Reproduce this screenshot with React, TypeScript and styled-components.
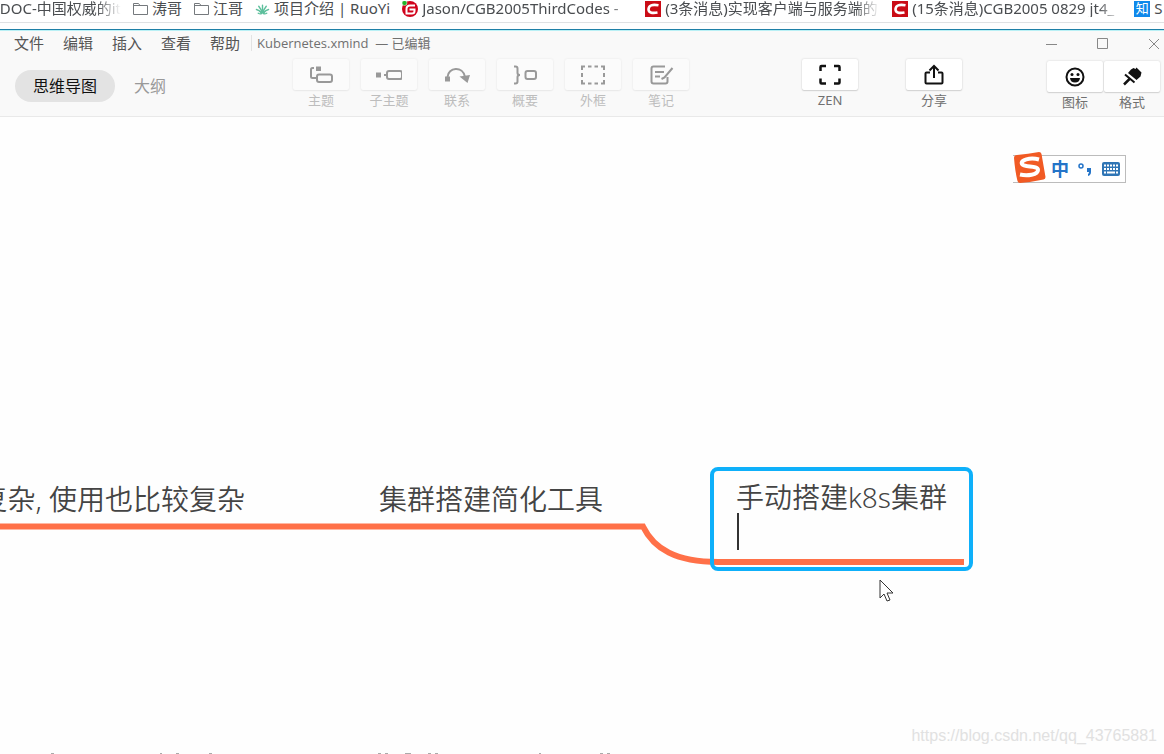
import React from 'react';
import styled, { createGlobalStyle } from 'styled-components';

const Global = createGlobalStyle`
  * { box-sizing: border-box; }
  html, body, #root { height: 100%; }
  body {
    margin: 0;
    overflow: hidden;
    background: #fefefe;
    font-family: "Noto Sans", "Noto Sans CJK SC", sans-serif;
  }
  button { font: inherit; color: inherit; border: 0; padding: 0; background: none; white-space: nowrap; }
  svg { display: block; flex: none; }
`;

const Page = styled.div`
  display: flex;
  flex-direction: column;
  height: 100%;
`;

const BookmarkBar = styled.nav`
  display: flex;
  flex: none;
  gap: 12px;
  height: 23px;
  overflow: hidden;
  background: #fff;
  border-bottom: 1px solid #dfe1e3;
`;

const Bookmark = styled.a`
  display: flex;
  flex: none;
  gap: 4px;
  align-items: center;
  height: 17px;
  color: #4a4d50;
  font-size: 15px;
  line-height: 17px;
  font-family: "Noto Sans", "Noto Sans CJK SC", sans-serif;
  text-decoration: none;
  white-space: nowrap;
`;

const FadedText = styled.span<{ $width: number; $end?: boolean }>`
  display: flex;
  justify-content: ${(p) => (p.$end ? 'flex-end' : 'flex-start')};
  width: ${(p) => p.$width}px;
  overflow: hidden;
  mask-image: linear-gradient(to left, transparent, #000 24px);
`;

const Window = styled.main`
  display: flex;
  flex: 1;
  flex-direction: column;
  min-height: 0;
  margin-top: 6px;
  border-top: 1px solid #1d7fa6;
`;

const Header = styled.header`
  flex: none;
  height: 87px;
  background: #f9f9f9;
  border-top: 1px solid #b9f0f5;
  border-bottom: 1px solid #e9e9e9;
`;

const TitleBar = styled.div`
  display: flex;
  align-items: center;
  height: 24px;
  padding: 0 4px 0 14px;
`;

const Menu = styled.div`
  display: flex;
  gap: 19px;
  padding-right: 11px;
  border-right: 1px solid #e3e3e3;
  line-height: 16px;
`;

const MenuItem = styled.button`
  color: #555;
  font-size: 15px;
  line-height: 16px;
`;

const FileName = styled.span`
  padding-left: 5px;
  color: #707070;
  font-size: 13px;
  line-height: 16px;
  white-space: pre;
  font-family: "Open Sans", "Noto Sans CJK SC", sans-serif;
`;

const WindowControls = styled.div`
  display: flex;
  gap: 38px;
  margin-left: auto;
`;

const Toolbar = styled.div`
  display: flex;
  align-items: flex-start;
  padding: 4px 4px 0 15px;
`;

const Tabs = styled.div`
  display: flex;
  flex: none;
  gap: 19px;
  margin-top: 11px;
`;

const Tab = styled.button<{ $active?: boolean }>`
  height: 32px;
  padding: ${(p) => (p.$active ? '0 18px' : '0')};
  border-radius: 16px;
  background: ${(p) => (p.$active ? '#e3e3e3' : 'transparent')};
  color: ${(p) => (p.$active ? '#111' : '#999')};
  font-size: 16px;
  line-height: 32px;
`;

const Tools = styled.div`
  display: flex;
  gap: 12px;
  margin-left: 127px;
`;

const RightTools = styled.div`
  display: flex;
  gap: 48px;
  margin-left: auto;
`;

const Tool = styled.button<{ $muted?: boolean }>`
  display: flex;
  flex: none;
  flex-direction: column;
  gap: 1px;
  align-items: center;
  width: 56px;
  color: ${(p) => (p.$muted ? '#bdbdbd' : '#707070')};
  font-size: 13px;
  line-height: 18px;
`;

const ToolFace = styled.span<{ $muted?: boolean }>`
  display: flex;
  align-items: center;
  justify-content: center;
  width: 56px;
  height: 31px;
  border-radius: 2px;
  background: ${(p) => (p.$muted ? '#fbfbfb' : '#fff')};
  color: ${(p) => (p.$muted ? '#999' : '#111')};
  box-shadow: 0 0 2px ${(p) => (p.$muted ? '#e4e4e4' : '#ccc')}, 0 1px 1px ${(p) => (p.$muted ? '#ececec' : '#d4d4d4')};
`;

const Panels = styled.div`
  display: flex;
  gap: 1px;
  margin: 2px 0 0 85px;
`;

const Canvas = styled.section`
  position: relative;
  flex: 1;
  min-height: 0;
  overflow: hidden;
  background: #fefefe;
`;

const Branches = styled.svg`
  position: absolute;
  top: 0;
  left: 0;
`;

const Topic = styled.div<{ $x: number; $y: number }>`
  position: absolute;
  left: ${(p) => p.$x}px;
  top: ${(p) => p.$y}px;
  color: #444;
  font-size: 28px;
  font-weight: 350;
  line-height: 36px;
  font-family: "Noto Sans", "Noto Sans CJK SC", sans-serif;
  white-space: nowrap;
`;

const ClippedTopic = styled(Topic)`
  left: auto;
  right: calc(100% - 245px);
`;

const SelectedTopic = styled(Topic)`
  width: 263px;
  height: 104px;
  padding: 10px 22px;
  border: 4px solid #0eb0fa;
  border-radius: 8px;
  line-height: 32px;
`;

const Caret = styled.span`
  display: block;
  width: 2px;
  height: 37px;
  margin-left: 1px;
  background: #333;
`;

const Pointer = styled.svg`
  position: absolute;
  left: 879px;
  top: 462px;
`;

const InputMethod = styled.div`
  position: absolute;
  top: 38px;
  right: 38px;
  display: flex;
  gap: 8px;
  align-items: center;
  height: 28px;
  padding-right: 4px;
  padding-left: 38px;
  border: 1px solid #bcbcbc;
  border-left: 0;
  background: #fff;
  color: #2474c8;
  font-size: 18px;
  font-weight: 700;
  line-height: 26px;
`;

const SogouLogo = styled.svg`
  position: absolute;
  top: -5px;
  left: 0;
`;

const Watermark = styled.div`
  position: absolute;
  right: 7px;
  bottom: 8px;
  color: #e1e1e1;
  font-family: "Liberation Sans", sans-serif;
  font-size: 16px;
  line-height: 20px;
`;

const Folder = () => (
  <svg width="15" height="16" viewBox="0 0 15 16" fill="#fff" stroke="#75797d">
    <path d="M.5 2.500h5l1.500 2h7.500v9H.5zM.5 4.500h6.500" />
  </svg>
);

const Leaf = () => (
  <svg width="15" height="16" viewBox="0 0 16 16" fill="none" stroke="#5dbf9c" strokeWidth="1.500" strokeLinecap="round">
    <path d="M8 12V4M7.500 12Q6.500 8 4 5M8.500 12Q9.500 8 12 5M7 12.500Q4.500 9 1.500 8.500M9 12.500q2.500-3.500 5.500-4M7 13q-2 .5-3.500-.5M9 13q2 .5 3.500-.5" />
  </svg>
);

const Gitee = () => (
  <svg width="16" height="16" viewBox="0 0 16 16">
    <circle cx="8" cy="8" r="8" fill="#d0021b" />
    <path d="M13 4.500H8Q4.500 4.500 4.500 8v4.500H10q2.500 0 2.500-2.500V8.500H7.500" fill="none" stroke="#fff" strokeWidth="2" />
    <circle cx="2.500" cy="2" r="2.500" fill="#20b52a" stroke="#fff" strokeWidth=".5" />
  </svg>
);

const Csdn = () => (
  <svg width="16" height="16" viewBox="0 0 16 16">
    <path fill="#ca0c16" d="M0 0h16v16H0z" />
    <path d="M13.500 4.300Q4 2.500 3.500 8.200q0 4.800 9 3.300" fill="none" stroke="#fff" strokeWidth="2.600" />
  </svg>
);

const Zhihu = styled.span`
  flex: none;
  width: 16px;
  height: 16px;
  background: #0f88eb;
  color: #fff;
  font-size: 13px;
  line-height: 15px;
  text-align: center;
`;

const Stroke = ({ children }: { children: React.ReactNode }) => (
  <svg width="26" height="22" viewBox="0 0 26 22" fill="none" stroke="currentColor" strokeWidth="2">
    {children}
  </svg>
);

const icons = {
  topic: (
    <Stroke>
      <path d="M6 4H4.500Q3 4 3 5.500v7Q3 14 4.500 14H8" />
      <rect x="9" y="10.500" width="15" height="7.500" rx="2" />
      <path d="M8 2.500h5v4.500H8z" fill="currentColor" stroke="none" />
    </Stroke>
  ),
  subtopic: (
    <Stroke>
      <path d="M0 8.500h5v5H0z" fill="currentColor" stroke="none" />
      <rect x="11" y="7" width="15" height="8" rx="2" />
      <path d="M8 11h3" />
    </Stroke>
  ),
  relation: (
    <Stroke>
      <path d="M3.500 13C4 3 19 1.500 21 13" />
      <path d="M1 12.500h5v5H1zM15.500 12.500L26 11l-2.500 8z" fill="currentColor" stroke="none" />
    </Stroke>
  ),
  summary: (
    <Stroke>
      <path d="M2 2.500h1.500q2 0 2 2V9q0 2 2.500 2-2.500 0-2.500 2v4.500q0 2-2 2H2" />
      <rect x="13.500" y="7" width="10.500" height="8" rx="2" />
    </Stroke>
  ),
  boundary: (
    <Stroke>
      <path d="M2 6V2.500h3M21 2.500h3V6M24 16v3.500h-3M5 19.500H2V16M8 2.500h3.500M14.500 2.500H18M8 19.500h3.500M14.500 19.500H18M2 9v4M24 9v4" />
    </Stroke>
  ),
  note: (
    <Stroke>
      <path d="M17 2.500H5.500q-2 0-2 2v13q0 2 2 2h12q2 0 2-2V13M7 8h9M7 12.500h5M24.500 4l-8 9.500-3 1.500" />
    </Stroke>
  ),
  zen: (
    <Stroke>
      <path d="M3.500 7V3q0-1 1-1H9M17 2h4.500q1 0 1 1v4M22.500 14.500v4q0 1-1 1H17M9 19.500H4.500q-1 0-1-1v-4" strokeWidth="2.500" />
    </Stroke>
  ),
  share: (
    <Stroke>
      <path d="M9 8.500H5.500q-1 0-1 1v9q0 1 1 1h15q1 0 1-1v-9q0-1-1-1H17M13 14V2.500M8.500 6.500L13 2l4.500 4.500" />
    </Stroke>
  ),
  smile: (
    <Stroke>
      <circle cx="13" cy="11" r="8.500" />
      <circle cx="10" cy="8.500" r="1.500" fill="currentColor" stroke="none" />
      <circle cx="16" cy="8.500" r="1.500" fill="currentColor" stroke="none" />
      <path d="M8 12h10q-.5 4.500-5 4.500T8 12z" fill="currentColor" stroke="none" />
    </Stroke>
  ),
  brush: (
    <Stroke>
      <path d="M12 3.500l2.500-1.500 2 1 1-1.500 5 5-1 4-4 3.500-8.500-7z" fill="currentColor" stroke="none" />
      <path d="M6 8.500l9.500 8" strokeWidth="2" />
      <path d="M11 12.500L5 18.500" strokeWidth="2.500" />
    </Stroke>
  ),
};

const tools: [keyof typeof icons, string][] = [
  ['topic', '主题'],
  ['subtopic', '子主题'],
  ['relation', '联系'],
  ['summary', '概要'],
  ['boundary', '外框'],
  ['note', '笔记'],
];

const ToolButton = ({ icon, label, muted }: { icon: keyof typeof icons; label: string; muted?: boolean }) => (
  <Tool $muted={muted}>
    <ToolFace $muted={muted}>{icons[icon]}</ToolFace>
    {label}
  </Tool>
);

const WindowButton = ({ label, d }: { label: string; d: string }) => (
  <button aria-label={label}>
    <svg width="13" height="13" viewBox="0 0 13 13" fill="none" stroke="#888">
      <path d={d} />
    </svg>
  </button>
);

export default function App() {
  return (
    <Page>
      <Global />
      <BookmarkBar>
        <Bookmark href="#"><FadedText $width={121} $end>DOC-中国权威的it</FadedText></Bookmark>
        <Bookmark href="#"><Folder />涛哥</Bookmark>
        <Bookmark href="#"><Folder />江哥</Bookmark>
        <Bookmark href="#"><Leaf />项目介绍 | RuoYi</Bookmark>
        <Bookmark href="#"><Gitee /><FadedText $width={211}>Jason/CGB2005ThirdCodes -</FadedText></Bookmark>
        <Bookmark href="#"><Csdn /><FadedText $width={215}>(3条消息)实现客户端与服务端的</FadedText></Bookmark>
        <Bookmark href="#"><Csdn /><FadedText $width={210}>(15条消息)CGB2005 0829 jt4_</FadedText></Bookmark>
        <Bookmark href="#"><Zhihu>知</Zhihu>S</Bookmark>
      </BookmarkBar>
      <Window>
        <Header>
          <TitleBar>
            <Menu>
              {['文件', '编辑', '插入', '查看', '帮助'].map((name) => <MenuItem key={name}>{name}</MenuItem>)}
            </Menu>
            <FileName>Kubernetes.xmind  — 已编辑</FileName>
            <WindowControls>
              <WindowButton label="最小化" d="M1 7.500h11" />
              <WindowButton label="最大化" d="M1.500 1.500h10v10h-10z" />
              <WindowButton label="关闭" d="M2 2l10 10M12 2L2 12" />
            </WindowControls>
          </TitleBar>
          <Toolbar>
            <Tabs>
              <Tab $active>思维导图</Tab>
              <Tab>大纲</Tab>
            </Tabs>
            <Tools>
              {tools.map(([icon, label]) => <ToolButton key={icon} icon={icon} label={label} muted />)}
            </Tools>
            <RightTools>
              <ToolButton icon="zen" label="ZEN" />
              <ToolButton icon="share" label="分享" />
            </RightTools>
            <Panels>
              <ToolButton icon="smile" label="图标" />
              <ToolButton icon="brush" label="格式" />
            </Panels>
          </Toolbar>
        </Header>
        <Canvas>
          <Branches width="1164" height="637" viewBox="0 117 1164 637" fill="none">
            <path d="M0 526.500H643C654 549 676 562 718 562H964" stroke="#ff7048" strokeWidth="6" />
            <path d="M51 753.500h3M160 753.500h2M176 753.500h3M209 753.500h3M378 753.500h3M385 753.500h3M405 753.500h6M428 753.500h3M435 753.500h3M539 753.500h2M600 753.500h3M607 753.500h3" stroke="#aaa" />
          </Branches>
          <ClippedTopic $x={0} $y={364}>复杂, 使用也比较复杂</ClippedTopic>
          <Topic $x={379} $y={364}>集群搭建简化工具</Topic>
          <SelectedTopic $x={710} $y={350}>
            手动搭建k8s集群
            <Caret />
          </SelectedTopic>
          <Pointer width="15" height="24" viewBox="0 0 15 24">
            <path d="M1 1v18l4-4 3 7 3-1-3-7h6z" fill="#fff" stroke="#333" />
          </Pointer>
          <InputMethod>
            <SogouLogo width="33" height="33" viewBox="0 0 33 33">
              <path d="M4 4Q15 3 26 1q2 0 2.500 2l4 23q0 2-2 2.500Q19 31 7 32q-2 0-2.500-2Q2 20 1 7q0-3 3-3z" fill="#f15a24" />
              <path d="M26 8.500C17 6 7 9 9 13c2 4 16 1 16 6 0 5-11 6-18 4.500" fill="none" stroke="#fff" strokeWidth="4" />
            </SogouLogo>
            <span>中</span>
            <svg width="16" height="18" viewBox="0 0 16 18" fill="none" stroke="#2474c8">
              <circle cx="4" cy="6" r="2" strokeWidth="1.500" />
              <path d="M10 8h4v4q0 3-3 4v-2q1-.5 1-2h-2z" fill="#2474c8" stroke="none" />
            </svg>
            <svg width="20" height="16" viewBox="0 0 20 16">
              <rect x="1" y="1" width="18" height="14" rx="2" fill="#2f75b5" />
              <path d="M3 4.500h14M3 8h14" stroke="#fff" strokeWidth="2" strokeDasharray="2 1" />
              <path d="M3 11.500h2M6 11.500h8M15 11.500h2" stroke="#fff" strokeWidth="2" />
            </svg>
          </InputMethod>
          <Watermark>https://blog.csdn.net/qq_43765881</Watermark>
        </Canvas>
      </Window>
    </Page>
  );
}
